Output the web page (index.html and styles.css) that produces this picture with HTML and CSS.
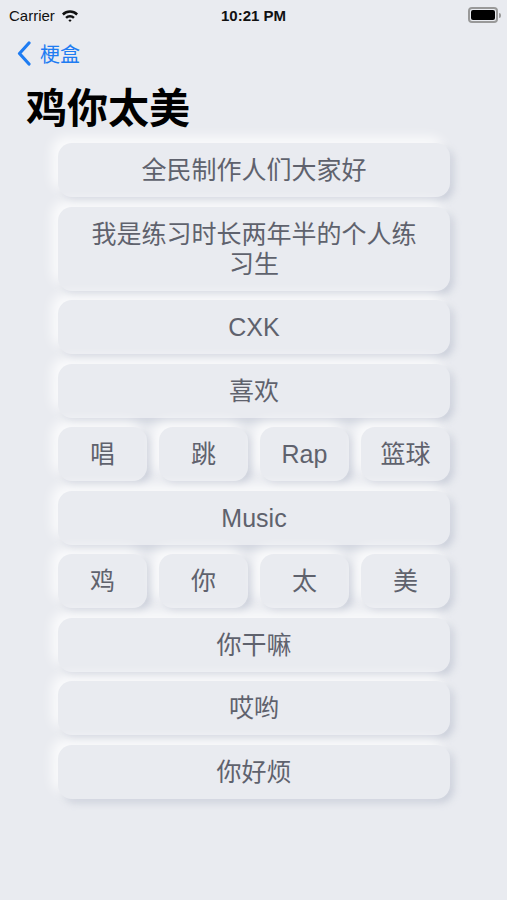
FILE: index.html
```html
<!DOCTYPE html>
<html lang="zh">
<head>
    <meta charset="UTF-8">
    <meta name="viewport" content="width=device-width, initial-scale=1.0">
    <title>鸡你太美</title>
    <link rel="stylesheet" href="styles.css">
</head>
<body>
    <div class="status-bar">
        <div class="carrier">
            Carrier
            <svg class="wifi" width="18" height="13" viewBox="0 0 18 13">
                <path d="M1 4.6 A11.5 11.5 0 0 1 17 4.6 L15.3 6.4 A9 9 0 0 0 2.7 6.4 Z" fill="#111"/>
                <path d="M4.2 8 A6.8 6.8 0 0 1 13.8 8 L12.1 9.8 A4.4 4.4 0 0 0 5.9 9.8 Z" fill="#111"/>
                <path d="M7.4 11.3 A2.3 2.3 0 0 1 10.6 11.3 L9 13 Z" fill="#111"/>
            </svg>
        </div>
        <div class="time">10:21 PM</div>
        <div class="battery">
            <div class="battery-body"><div class="battery-level"></div></div>
            <div class="battery-cap"></div>
        </div>
    </div>

    <div class="nav">
        <svg class="back-icon" width="14" height="25" viewBox="0 0 14 25">
            <path d="M12 2 L2.5 12.5 L12 23" fill="none" stroke="#1e7cf2" stroke-width="3.2" stroke-linecap="round" stroke-linejoin="round"/>
        </svg>
        <span class="back-text">梗盒</span>
    </div>

    <h1 class="title">鸡你太美</h1>

    <div class="buttons">
        <div class="btn">全民制作人们大家好</div>
        <div class="btn">我是练习时长两年半的个人练习生</div>
        <div class="btn">CXK</div>
        <div class="btn">喜欢</div>
        <div class="btn-row">
            <div class="btn">唱</div>
            <div class="btn">跳</div>
            <div class="btn">Rap</div>
            <div class="btn">篮球</div>
        </div>
        <div class="btn">Music</div>
        <div class="btn-row">
            <div class="btn">鸡</div>
            <div class="btn">你</div>
            <div class="btn">太</div>
            <div class="btn">美</div>
        </div>
        <div class="btn">你干嘛</div>
        <div class="btn">哎哟</div>
        <div class="btn">你好烦</div>
    </div>
</body>
</html>
```

FILE: styles.css
```css
body {
    margin: 0;
    background-color: #e9ebf0;
    font-family: "Liberation Sans", "Noto Sans CJK SC", sans-serif;
    width: 507px;
    height: 900px;
    overflow: hidden;
}
.status-bar {
    display: flex;
    align-items: center;
    justify-content: space-between;
    height: 28px;
    padding: 1px 6px 0 9px;
    position: relative;
}
.carrier {
    display: flex;
    align-items: center;
    gap: 6px;
    font-size: 15px;
    color: #111;
}
.time {
    position: absolute;
    left: 0;
    right: 0;
    text-align: center;
    font-size: 15px;
    font-weight: bold;
    color: #111;
}
.battery {
    display: flex;
    align-items: center;
    gap: 1px;
}
.battery-body {
    width: 24px;
    height: 10px;
    border: 2px solid #999;
    border-radius: 4px;
    padding: 1px;
}
.battery-level {
    width: 100%;
    height: 100%;
    background-color: #000;
    border-radius: 2px;
}
.battery-cap {
    width: 2px;
    height: 5px;
    background-color: #999;
    border-radius: 0 2px 2px 0;
}
.nav {
    display: flex;
    align-items: center;
    gap: 9px;
    height: 48px;
    padding-left: 17px;
}
.back-text {
    font-family: "Noto Sans CJK SC", sans-serif;
    font-size: 20px;
    color: #1e7cf2;
}
.title {
    margin: 0 0 0 26px;
    font-family: "Noto Sans CJK SC", sans-serif;
    font-size: 41px;
    line-height: 56px;
    font-weight: bold;
    color: #000;
}
.buttons {
    display: flex;
    flex-direction: column;
    gap: 9.5px;
    width: 392px;
    margin: 10px 0 0 58px;
}
.btn-row {
    display: flex;
    gap: 12px;
}
.btn-row .btn {
    flex: 1;
    padding-left: 0;
    padding-right: 0;
}
.btn {
    background-color: #e9ebf0;
    border-radius: 14px;
    padding: 12px 24px;
    font-family: "Liberation Sans", "Noto Sans CJK SC", sans-serif;
    font-size: 25px;
    line-height: 30px;
    color: #5f626d;
    text-align: center;
    box-shadow: -6px -6px 12px rgba(255, 255, 255, 0.8), 4px 4px 7px rgba(170, 178, 195, 0.45);
}
```
